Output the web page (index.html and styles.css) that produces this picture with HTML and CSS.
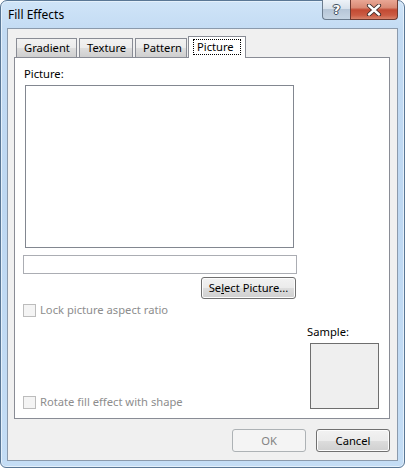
FILE: index.html
```html
<!DOCTYPE html>
<html>
<head>
<meta charset="utf-8">
<link rel="stylesheet" href="styles.css">
</head>
<body>
<div class="window">
  <div class="titlebar">
    <span class="title">Fill Effects</span>
    <div class="caption">
      <div class="cap help"><span class="glyph">?</span></div>
      <div class="cap close">
        <svg width="16" height="12" viewBox="0 0 16 12">
          <path d="M3 1.5 L13 10.5 M13 1.5 L3 10.5" stroke="#3b2a28" stroke-width="4.2" stroke-linecap="round" fill="none"/>
          <path d="M3 1.5 L13 10.5 M13 1.5 L3 10.5" stroke="#ffffff" stroke-width="2.4" stroke-linecap="round" fill="none"/>
        </svg>
      </div>
    </div>
  </div>
  <div class="client">
    <div class="tabs">
      <div class="tab">Gradient</div>
      <div class="tab">Texture</div>
      <div class="tab">Pattern</div>
      <div class="tab active"><span class="focus">Picture</span></div>
    </div>
    <div class="panel">
      <div class="label">Picture:</div>
      <div class="picbox"></div>
      <div class="textbox"></div>
      <div class="btnrow"><div class="btn select">Se<u>l</u>ect Picture...</div></div>
      <div class="lower">
        <div class="checks">
          <div class="check"><span class="box"></span><span>Lock picture aspect ratio</span></div>
          <div class="check"><span class="box"></span><span>Rotate fill effect with shape</span></div>
        </div>
        <div class="sample">
          <div class="sample-label">Sample:</div>
          <div class="sample-box"></div>
        </div>
      </div>
    </div>
    <div class="footer">
      <div class="btn ok disabled">OK</div>
      <div class="btn cancel">Cancel</div>
    </div>
  </div>
</div>
</body>
</html>
```

FILE: styles.css
```css
* { box-sizing: border-box; }
html, body { margin: 0; padding: 0; }
body {
  width: 405px;
  height: 468px;
  background: #ffffff;
  font-family: "Noto Sans", "Open Sans", sans-serif;
  font-size: 11.2px;
  color: #000;
}
.window {
  width: 405px;
  height: 468px;
  border: 1px solid #5a7795;
  border-radius: 7px 7px 6px 6px;
  background: linear-gradient(to bottom, #cfe4f8 0px, #c3dbf3 30px, #bed8f2 200px, #c4ddf5 468px);
  box-shadow: inset 0 0 0 1px #e4f0fb;
  padding: 0 6px 6px 6px;
  display: flex;
  flex-direction: column;
}
.titlebar {
  height: 28px;
  display: flex;
  justify-content: space-between;
  align-items: flex-start;
}
.title {
  font-size: 12px;
  padding: 6px 0 0 1px;
  line-height: 16px;
  color: #000;
}
.caption {
  display: flex;
  margin-top: -1px;
}
.cap {
  height: 20px;
  display: flex;
  align-items: center;
  justify-content: center;
}
.help {
  width: 28px;
  border: 1px solid #6b7c8e;
  border-top: none;
  border-right: none;
  border-radius: 0 0 0 4px;
  background: linear-gradient(to bottom, #eef3f8 0%, #d8e2ec 45%, #b6c6d7 50%, #c6d5e4 100%);
}
.help .glyph {
  font-family: "DejaVu Sans", sans-serif;
  font-weight: bold;
  font-size: 13px;
  line-height: 14px;
  color: #ffffff;
  text-shadow: 0 0 1px #334, 1px 0 0 #445566, -1px 0 0 #445566, 0 1px 0 #445566, 0 -1px 0 #445566;
}
.close {
  width: 48px;
  border: 1px solid #6e3a31;
  border-top: none;
  border-radius: 0 0 4px 0;
  background: linear-gradient(to bottom, #e9a795 0%, #d98a75 40%, #c24a33 52%, #cb5b43 80%, #d8836b 100%);
}
.client {
  flex: 1;
  background: #f0f0f0;
  border: 1px solid #8b9aac;
  padding: 7px 7px 8px 6px;
  display: flex;
  flex-direction: column;
}
.tabs {
  display: flex;
  align-items: flex-end;
  padding-left: 2px;
  height: 21px;
  position: relative;
  z-index: 2;
}
.tab {
  height: 19px;
  padding: 0 7px;
  margin-right: 2px;
  border: 1px solid #898c95;
  border-bottom: none;
  background: linear-gradient(to bottom, #f2f2f2 0%, #ebebeb 50%, #dddddd 51%, #cfcfcf 100%);
  line-height: 18px;
  white-space: nowrap;
}
.tab:nth-child(1) { width: 61px; }
.tab:nth-child(2) { width: 54px; }
.tab:nth-child(3) { width: 52px; margin-right: 1px; }
.tab.active {
  height: 22px;
  width: 58px;
  margin-bottom: -1px;
  background: #ffffff;
  padding: 2px 4px 0 4px;
}
.focus {
  display: block;
  border: 1px dotted #000;
  line-height: 14px;
  padding: 0 3px;
}
.panel {
  height: 362px;
  background: #ffffff;
  border: 1px solid #898c95;
  padding: 8px 8px 8px 8px;
  display: flex;
  flex-direction: column;
  position: relative;
  z-index: 1;
}
.label {
  line-height: 16px;
  margin-left: 1px;
}
.picbox {
  margin-top: 3px;
  margin-left: 2px;
  width: 269px;
  height: 163px;
  border: 1px solid #828790;
}
.textbox {
  margin-top: 7px;
  width: 274px;
  height: 19px;
  border: 1px solid #abadb3;
}
.btnrow {
  width: 273px;
  display: flex;
  justify-content: flex-end;
  margin-top: 3px;
}
.btn {
  height: 23px;
  border: 1px solid #707070;
  border-radius: 3px;
  background: linear-gradient(to bottom, #f2f2f2 0%, #ebebeb 50%, #dddddd 51%, #cfcfcf 100%);
  box-shadow: inset 0 0 0 1px #fcfcfc;
  display: flex;
  align-items: center;
  justify-content: center;
  line-height: 16px;
  white-space: nowrap;
}
.select { width: 95px; height: 22px; }
.lower {
  flex: 1;
  margin-top: 3px;
  display: flex;
  justify-content: space-between;
}
.checks {
  display: flex;
  flex-direction: column;
  justify-content: space-between;
}
.check {
  display: flex;
  align-items: center;
  line-height: 16px;
  color: #8d8d8d;
}
.box {
  width: 13px;
  height: 13px;
  border: 1px solid #bcbcbc;
  background: #f4f4f4;
  margin-right: 4px;
}
.sample {
  align-self: flex-end;
  width: 72px;
  margin-right: 2px;
  margin-bottom: 1px;
}
.sample-label {
  line-height: 16px;
  margin-bottom: 3px;
}
.sample-box {
  margin-left: 3px;
  width: 69px;
  height: 66px;
  border: 1px solid #6e6e6e;
  background: #efefef;
}
.footer {
  margin-top: 10px;
  display: flex;
  justify-content: flex-end;
  gap: 10px;
}
.ok, .cancel { width: 74px; }
.btn.disabled {
  border-color: #adb2b5;
  background: #f4f4f4;
  box-shadow: none;
  color: #838383;
}
```
